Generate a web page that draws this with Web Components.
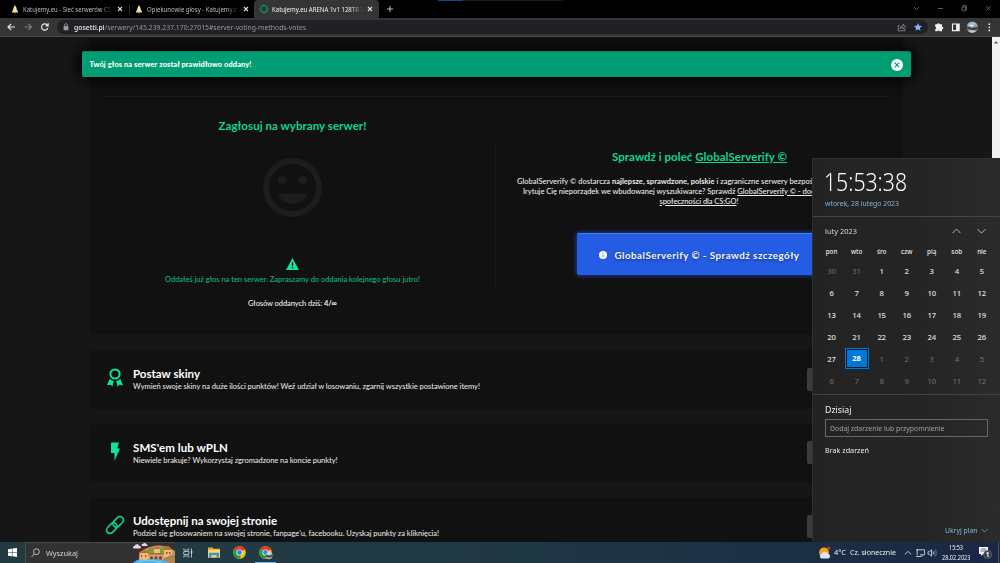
<!DOCTYPE html>
<html lang="pl">
<head>
<meta charset="utf-8">
<title>Katujemy.eu ARENA 1v1 128TR</title>
<style>
    body {
        margin: 0;
        background: #000;
        overflow: hidden;
    }
</style>
</head>
<body>
<desktop-screen></desktop-screen>

<script>
// Base for every element: puts the markup in an open shadow root
class BaseElement extends HTMLElement {
    constructor() {
        super();
        this.shadow = this.attachShadow({mode: "open"});
    }

    connectedCallback() {
        this.shadow.innerHTML = `<style>* { box-sizing: border-box; }</style>` + this.render();
    }
}

// One line of text, tracked in or out to the width given in "w".
// With "squeeze" the glyphs are narrowed instead of the gaps.
class FitText extends BaseElement {
    render() {
        return `<style>:host { display: inline-block; white-space: nowrap; transform-origin: 0 50%; }</style><slot></slot>`;
    }

    connectedCallback() {
        super.connectedCallback();
        const target = parseFloat(this.getAttribute("w"));
        const natural = this.getBoundingClientRect().width;
        const count = this.textContent.length;
        if (!target || !natural) return;
        if (this.hasAttribute("squeeze")) {
            this.style.transform = `scaleX(${(target / natural).toFixed(4)})`;
            this.style.marginRight = (target - natural).toFixed(2) + "px";
        } else {
            this.style.letterSpacing = ((target - natural) / count).toFixed(4) + "px";
        }
    }
}
customElements.define("fit-text", FitText);

class BrowserTab extends BaseElement {
    render() {
        const active = this.hasAttribute("active");
        const icon = active
            ? `<svg width="10" height="10" viewBox="0 0 10 10"><circle cx="5" cy="5" r="3.4" fill="none" stroke="#0c8d68" stroke-width="1.2"/><path d="M5 .6v1.6M5 7.8v1.6M.6 5h1.6M7.8 5h1.6" stroke="#0c8d68" stroke-width="1.4"/></svg>`
            : `<svg width="10" height="10" viewBox="0 0 10 10"><path d="M5 1 6.3 3.6 7 6 8.2 8H1.8L3 6l.6-2.4z" fill="#f3e2a4"/><path d="M2 8h6" stroke="#e0c878" stroke-width="1"/><path d="M4.2 8.2h1.6v1H4.2z" fill="#d9a441"/></svg>`;
        return `
        <style>
            :host {
                display: flex;
                align-items: center;
                height: 18px;
                font: 7.4px "Noto Sans", sans-serif;
                color: #bcbcbc;
            }
            :host([active]) {
                background: #353535;
                color: #f4f4f4;
                border-radius: 4px 4px 0 0;
            }
            .title {
                margin-left: 3px;
                overflow: hidden;
                flex: 1;
                line-height: 12px;
                -webkit-mask: linear-gradient(90deg, #000 86%, transparent);
            }
            .close { margin: 0 5.5px 0 4px; }
        </style>
        ${icon}
        <div class="title"><slot></slot></div>
        <svg class="close" width="6" height="6" viewBox="0 0 6 6"><path d="M1 1l4 4M5 1L1 5" stroke="#ddd" stroke-width="1.1"/></svg>
        `;
    }
}
customElements.define("browser-tab", BrowserTab);

class TabStrip extends BaseElement {
    render() {
        return `
        <style>
            :host {
                display: flex;
                align-items: center;
                height: 18px;
                background: linear-gradient(90deg, transparent 438px, #0a4d84 438px 463px, #1b1b1b 463px 563px, transparent 563px) 0 0 / 100% 1px no-repeat #000;
            }
            browser-tab:nth-of-type(1) { width: 119px; margin-left: 9.5px; }
            browser-tab:nth-of-type(2) { width: 120px; margin-left: 4.5px; }
            browser-tab:nth-of-type(3) { width: 124.5px; padding-left: 4.5px; }
            i { width: 1px; height: 9px; background: #333; }
            .plus { margin-left: 7.5px; }
            .win { margin-left: auto; margin-top: -3px; }
        </style>
        <browser-tab><fit-text w="93" squeeze>Katujemy.eu - Sieć serwerów CS 1</fit-text></browser-tab>
        <i></i>
        <browser-tab><fit-text w="94" squeeze>Opiekunowie głosy - Katujemy.eu</fit-text></browser-tab>
        <browser-tab active><fit-text w="94" squeeze>Katujemy.eu ARENA 1v1 128TR M</fit-text></browser-tab>
        <svg class="plus" width="8" height="8" viewBox="0 0 8 8"><path d="M4 1v6M1 4h6" stroke="#bbb" stroke-width="1"/></svg>
        <svg class="win" width="90" height="10" viewBox="0 0 90 10" fill="none" stroke="#737373" stroke-width=".8">
            <path d="M4 4l2.5 2.5L9 4M28 5.5h5"/>
            <path d="M52 4h3.4v3.8H52zM53 4V2.6h3.5v4h-1.1"/>
            <path d="M76.2 3l4.6 4.6M80.8 3l-4.6 4.6"/>
        </svg>
        `;
    }
}
customElements.define("tab-strip", TabStrip);

class AddressBar extends BaseElement {
    render() {
        return `
        <style>
            :host {
                display: flex;
                align-items: center;
                height: 19px;
                padding-left: 7px;
                background: #353535;
                border-bottom: 1px solid #4a4a4a;
                font: 7.7px "Noto Sans", sans-serif;
                color: #96989b;
            }
            .nav { width: 44px; height: 12px; }
            .field {
                display: flex;
                align-items: center;
                width: 871px;
                height: 14px;
                margin-left: 6px;
                padding-left: 6px;
                border-radius: 7px;
                background: #202124;
            }
            .url { margin-left: 5px; line-height: 12px; }
            .marks { margin-left: auto; margin-right: 5px; }
            b { font-weight: 500; color: #f1f2f4; }
            .tools { margin-left: 5px; }
        </style>
        <svg class="nav" viewBox="0 0 44 12" fill="none" stroke-width="1.2">
            <path d="M8 6H1.3M4.2 2.8L1 6l3.2 3.2" stroke="#e8e8e8"/>
            <path d="M17.5 6h6.7M21.3 2.8L24.5 6l-3.2 3.2" stroke="#7c7c7c"/>
            <path d="M40.4 4.2A3.2 3.2 0 1 0 40.8 7M41.1 2.3v2.5h-2.5" stroke="#e8e8e8"/>
        </svg>
        <div class="field">
            <svg width="6" height="8" viewBox="0 0 6 8"><rect x=".6" y="3" width="4.8" height="4.2" rx=".5" fill="#9a9b9e"/><path d="M1.6 3.2V2.1a1.4 1.4 0 0 1 2.8 0v1.1" fill="none" stroke="#9a9b9e" stroke-width=".8"/></svg>
            <div class="url"><fit-text w="232" squeeze><b>gosetti.pl</b>/serwery/145.239.237.170:27015#server-voting-methods-votes</fit-text></div>
            <svg class="marks" width="26" height="10" viewBox="0 0 26 10">
                <path d="M2.8 3.6H1.2v5.2h6.6V6.8M3 7c.2-2 1.4-3 3.2-3V2.2L8.8 4.8 6.2 7V5.6C4.8 5.6 3.8 6 3 7z" fill="none" stroke="#9a9b9e" stroke-width=".75"/>
                <path d="M21 1l1.2 2.7 2.9.3-2.2 1.9.7 2.9-2.6-1.5-2.6 1.5.7-2.9L16.9 4l2.9-.3z" fill="#8ab4f8"/>
            </svg>
        </div>
        <svg class="tools" width="66" height="14" viewBox="0 0 66 14">
            <path d="M2.2 4.3h2a1.3 1.3 0 0 1 2.5 0H9v2.4a1.3 1.3 0 0 1 0 2.6v2H6.7a1.3 1.3 0 0 0-2.4 0H2.200V9.2a1.3 1.3 0 0 0 0-2.500z" fill="#f1f1f1"/>
            <path d="M19.500 4h6.600v6.600h-6.600z" fill="none" stroke="#f1f1f1" stroke-width="1.2"/><path d="M23.100 4h3v6.600h-3z" fill="#f1f1f1"/>
            <circle cx="39.3" cy="7.2" r="5.6" fill="#8d9295"/>
            <path d="M34.3 5a5.6 5.6 0 0 1 10 0z" fill="#9fb7ca"/>
            <path d="M34 6.500l5 1.500 5.500-1 .2 2-4 1.200-6.500-1.500z" fill="#393c3f"/>
            <path d="M34.800 5.800l4-1.300 3 1.500-2 .8z" fill="#e1e4e6"/>
            <path d="M35.300 11l4-.8 3.500.8a5 5 0 0 1-7.500 0z" fill="#c7c9ca"/>
            <g fill="#e8e8e8"><circle cx="56.3" cy="4.2" r=".9"/><circle cx="56.3" cy="7.3" r=".9"/><circle cx="56.3" cy="10.4" r=".9"/></g>
        </svg>
        `;
    }
}
customElements.define("address-bar", AddressBar);

class VoteToast extends BaseElement {
    render() {
        return `
        <style>
            :host {
                display: flex;
                align-items: center;
                justify-content: space-between;
                padding: 0 8px 0 7.5px;
                border-radius: 2px;
                background: #009d72;
                box-shadow: 0 0 14px 3px #000;
                border-top: 1px solid #0a7d5d;
                color: #fff;
                font: 900 7.4px/12px Lato, sans-serif;
            }
        </style>
        <slot></slot>
        <svg width="12" height="12" viewBox="0 0 12 12"><circle cx="6" cy="6" r="6" fill="#fff"/><path d="M3.7 3.7l4.6 4.6M8.3 3.7L3.7 8.3" stroke="#009d72" stroke-width="1.2"/></svg>
        `;
    }
}
customElements.define("vote-toast", VoteToast);

class VoteCard extends BaseElement {
    render() {
        return `
        <style>
            :host {
                display: block;
                height: 298px;
                padding-top: 59px;
                background: #111;
                border-radius: 0 0 4px 4px;
                font: 500 7.5px/12px Lato, sans-serif;
                color: #ececec;
            }
            .rule { height: 1px; margin: 0 14px; background: #1b1b1b; }
            .columns { display: flex; }
            .left, .right {
                display: flex;
                flex-direction: column;
                align-items: center;
                width: 405px;
            }
            .left { padding-top: 21px; }
            .right { padding-top: 51.5px; width: 407px; }
            .divider { width: 1px; height: 144px; margin-top: 48px; background: #1a1a1a; }
            h2 {
                margin: 0;
                font: bold 11.5px/16px Lato, sans-serif;
                color: #0bd596;
            }
            .mood { margin-top: 17.5px; fill: #1d1d1d; }
            .warn { margin-top: 35.5px; }
            .done { margin-top: 3.5px; color: #0cb681; }
            .count { margin-top: 12px; }
            .about {
                align-self: stretch;
                display: flex;
                flex-direction: column;
                align-items: flex-start;
                margin-top: 12px;
                line-height: 10px;
            }
            .about fit-text:nth-child(1) { margin-left: 21px; }
            .about fit-text:nth-child(2) { margin-left: 27px; }
            .about fit-text:nth-child(3) { margin-left: 163.5px; }
            .button {
                display: flex;
                align-items: center;
                width: 245px;
                height: 42px;
                margin-top: 26.5px;
                padding: 0 0 0 22px;
                border-radius: 2px;
                background: #245de3;
                border-top: 1px solid #4b7bea;
                box-shadow: 0 0 5px #1b4fc9;
                font: bold 9.8px/14px Lato, sans-serif;
                color: #f4f7ff;
                text-shadow: 0 1px 3px rgba(0, 0, 0, .5);
            }
            .button fit-text { margin-left: 7.5px; }
        </style>
        <div class="rule"></div>
        <div class="columns">
            <div class="left">
                <h2><fit-text w="148">Zagłosuj na wybrany serwer!</fit-text></h2>
                <svg class="mood" width="71" height="71" viewBox="0 0 24 24">
                    <path fill-rule="evenodd" d="M12 2a10 10 0 1 0 0 20 10 10 0 0 0 0-20zm0 18a8 8 0 1 1 0-16 8 8 0 0 1 0 16z"/>
                    <circle cx="8.5" cy="9.5" r="1.5"/><circle cx="15.5" cy="9.5" r="1.5"/>
                    <path d="M7 14a5.3 5.3 0 0 0 10 0z"/>
                </svg>
                <svg class="warn" width="13" height="12" viewBox="0 0 13 12"><path d="M6.5 0L13 12H0z" fill="#0fe3a0"/><path d="M6.5 4.3v3.500M6.5 8.800v1.400" stroke="#111" stroke-width="1.2"/></svg>
                <div class="done"><fit-text w="255">Oddałeś już głos na ten serwer. Zapraszamy do oddania kolejnego głosu jutro!</fit-text></div>
                <div class="count"><fit-text w="89">Głosów oddanych dziś: <b>4/∞</b></fit-text></div>
            </div>
            <div class="divider"></div>
            <div class="right">
                <h2><fit-text w="175">Sprawdź i poleć <u>GlobalServerify ©</u></fit-text></h2>
                <div class="about">
                    <fit-text w="296">GlobalServerify © dostarcza <b>najlepsze, sprawdzone, polskie</b> i zagraniczne serwery bezpoś</fit-text>
                    <fit-text w="291.5">Irytuje Cię nieporządek we wbudowanej wyszukiwarce? Sprawdź <u>GlobalServerify © - doc</u></fit-text>
                    <fit-text w="79"><u>społeczności dla CS:GO</u>!</fit-text>
                </div>
                <div class="button">
                    <svg width="8" height="8" viewBox="0 0 8 8"><circle cx="4" cy="4" r="4" fill="#fff"/><path d="M4 1.7v1M4 3.5v2.6" stroke="#6f93e6" stroke-width="1"/></svg>
                    <fit-text w="185">GlobalServerify © - Sprawdź szczegóły</fit-text>
                </div>
            </div>
        </div>
        `;
    }
}
customElements.define("vote-card", VoteCard);

class VoteMethod extends BaseElement {
    render() {
        const icons = {
            award: `<circle cx="9" cy="6" r="4.6" fill="none" stroke="#0fe3a0" stroke-width="2"/><path d="M3.7 10.8c1 1.1 2.3 1.9 4.2 2.2L6.3 18.7 4.8 16.8 1 17.2zM14.3 10.8c-1 1.1-2.3 1.9-4.2 2.2l1.6 5.7 1.5-1.9 3.8.4z" fill="#0fe3a0"/>`,
            bolt: `<path d="M5 .5h8l-1.7 6H14L8.5 18.800V11H5z" fill="#0fe3a0"/>`,
            link: `<g transform="rotate(-45 9 10)" fill="none" stroke="#0cd294" stroke-width="1.6"><rect x="-1.5" y="6.5" width="12" height="7" rx="3.5"/><rect x="7.5" y="6.5" width="12" height="7" rx="3.5"/></g>`
        };
        return `
        <style>
            :host {
                display: flex;
                align-items: center;
                height: 58.5px;
                padding-left: 15.5px;
                border-radius: 4px;
                background: #111;
                color: #e2e2e2;
                font: 500 7.5px/10px Lato, sans-serif;
            }
            svg { margin-top: -2px; overflow: visible; }
            .text { margin-left: 9.5px; padding-top: 1px; }
            .title { font: bold 11.5px/14px Lato, sans-serif; color: #fff; }
            .desc { padding-top: .7px; }
            .go {
                width: 80px;
                height: 23px;
                margin: 0 16px 0 auto;
                background: linear-gradient(90deg, #3c3c3c, #303030);
                border-radius: 2px;
            }
        </style>
        <svg width="18" height="20" viewBox="0 0 18 20">${icons[this.getAttribute("icon")]}</svg>
        <div class="text">
            <div class="title"><slot name="title"></slot></div>
            <div class="desc"><slot></slot></div>
        </div>
        <div class="go"></div>
        `;
    }
}
customElements.define("vote-method", VoteMethod);

class SitePage extends BaseElement {
    render() {
        return `
        <style>
            :host {
                display: flex;
                position: relative;
                height: 505px;
                overflow: hidden;
                background: #161616;
            }
            main {
                display: flex;
                flex-direction: column;
                gap: 15px;
                width: 813px;
                margin-left: 90px;
            }
            vote-card, vote-method { flex-shrink: 0; }
            vote-toast {
                position: absolute;
                left: 82px;
                top: 14px;
                width: 828.5px;
                height: 26px;
            }
            .scroll {
                width: 8px;
                margin-left: auto;
                padding: 4px 0 0 2px;
                background: #f1f1f1;
            }
            .scroll svg { display: block; }
        </style>
        <main>
            <vote-card></vote-card>
            <vote-method icon="award">
                <fit-text slot="title" w="67">Postaw skiny</fit-text>
                <fit-text w="347">Wymień swoje skiny na duże ilości punktów! Weź udział w losowaniu, zgarnij wszystkie postawione itemy!</fit-text>
            </vote-method>
            <vote-method icon="bolt">
                <fit-text slot="title" w="95">SMS'em lub wPLN</fit-text>
                <fit-text w="204.5">Niewiele brakuje? Wykorzystaj zgromadzone na koncie punkty!</fit-text>
            </vote-method>
            <vote-method icon="link">
                <fit-text slot="title" w="144">Udostępnij na swojej stronie</fit-text>
                <fit-text w="306">Podziel się głosowaniem na swojej stronie, fanpage'u, facebooku. Uzyskaj punkty za kliknięcia!</fit-text>
            </vote-method>
        </main>
        <div class="scroll"><svg width="4" height="3" viewBox="0 0 4 3"><path d="M2 0l2 2.5H0z" fill="#555"/></svg></div>
        <vote-toast><fit-text w="162">Twój głos na serwer został prawidłowo oddany!</fit-text></vote-toast>
        `;
    }
}
customElements.define("site-page", SitePage);

class CalendarFlyout extends BaseElement {
    // Six weeks starting on Monday, 30 January
    days() {
        let html = "";
        for (let i = 0; i < 42; i++) {
            const day = i < 2 ? 30 + i : i < 30 ? i - 1 : i - 29;
            const type = i < 2 || i > 29 ? "dim" : day === 28 ? "today" : "";
            html += `<span class="${type}">${day}</span>`;
        }
        return html;
    }

    render() {
        return `
        <style>
            :host {
                display: flex;
                flex-direction: column;
                background: linear-gradient(90deg, #232323, #252525 60%, #2b2b2b);
                border: solid #303030;
                border-width: 1px 0 0 1px;
                font: 7.6px/12px "Noto Sans", sans-serif;
                color: #e8e8e8;
            }
            .clock {
                height: 58px;
                padding: 4.5px 0 0 11px;
                border-bottom: 1px solid #444;
            }
            .time { font: 300 25px/35px "Noto Sans", sans-serif; color: #fff; }
            .date { line-height: 8px; color: #83b5dc; margin: 0 0 0 1px; }
            .time fit-text, .date fit-text { display: block; width: max-content; }
            .month {
                display: flex;
                align-items: center;
                justify-content: space-between;
                height: 27px;
                padding: 0 14px 0 12px;
                color: #d4d4d4;
            }
            .week, .grid {
                display: grid;
                grid-template-columns: repeat(7, 25.05px);
                margin-left: 6px;
                text-align: center;
                place-items: center;
            }
            .week { height: 15px; font-size: 6.3px; font-weight: 500; }
            .grid { grid-auto-rows: 21.9px; margin-top: 1.2px; font-size: 7.7px; font-weight: 500; color: #e0e0e0; }
            .grid span { letter-spacing: -.2px; }
            .grid .dim { color: #727272; font-weight: 400; }
            .grid .today {
                width: 24px;
                height: 21px;
                padding: 1px;
                border: 1px solid #0078d7;
                background: #0078d7;
                box-shadow: inset 0 0 0 1px #101820;
                line-height: 17px;
                font-weight: 700;
                color: #fff;
            }
            .events {
                flex: 1;
                display: flex;
                flex-direction: column;
                align-items: flex-start;
                margin-top: 2.4px;
                padding: 8.5px 12px 6px 11.5px;
                border-top: 1px solid #414141;
            }
            .events h3 { margin: 0; font: 9.2px/13px "Noto Sans", sans-serif; color: #f1f1f1; }
            .input {
                width: 163px;
                height: 18px;
                margin: 3px 0 6.5px;
                padding: 2px 0 0 4px;
                border: 1px solid #686868;
                color: #a0a0a0;
            }
            .hide {
                display: flex;
                align-items: center;
                gap: 3px;
                margin: auto 0 0 auto;
                color: #83b5dc;
            }
        </style>
        <div class="clock">
            <div class="time"><fit-text w="83" squeeze>15:53:38</fit-text></div>
            <div class="date"><fit-text w="74" squeeze>wtorek, 28 lutego 2023</fit-text></div>
        </div>
        <div class="month">
            <fit-text w="32" squeeze>luty 2023</fit-text>
            <svg width="34" height="6" viewBox="0 0 34 6" fill="none" stroke="#c0c0c0" stroke-width=".9"><path d="M.5 5.2L4.5 1l4 4.2M25.5 1l4 4.2 4-4.2"/></svg>
        </div>
        <div class="week"><span>pon</span><span>wto</span><span>śro</span><span>czw</span><span>pią</span><span>sob</span><span>nie</span></div>
        <div class="grid">${this.days()}</div>
        <div class="events">
            <h3><fit-text w="26.5" squeeze>Dzisiaj</fit-text></h3>
            <div class="input"><fit-text w="114.5" squeeze>Dodaj zdarzenie lub przypomnienie</fit-text></div>
            <fit-text w="44" squeeze>Brak zdarzeń</fit-text>
            <div class="hide"><fit-text w="32.5" squeeze>Ukryj plan</fit-text><svg width="7" height="5" viewBox="0 0 7 5"><path d="M.5 1l3 3 3-3" fill="none" stroke="#83b5dc" stroke-width=".7"/></svg></div>
        </div>
        `;
    }
}
customElements.define("calendar-flyout", CalendarFlyout);

class TaskBar extends BaseElement {
    chrome() {
        return `
            <circle cx="6.5" cy="6.5" r="6.3" fill="#fbc116"/>
            <path d="M6.5 6.5L1.05 3.35A6.3 6.3 0 0 1 11.96 3.35z" fill="#e33b2e"/>
            <path d="M6.5 6.5L1.05 3.35A6.3 6.3 0 0 0 6.3 12.8L9.2 8z" fill="#229a48"/>
            <path d="M6.5 3.4H12" stroke="#e33b2e" stroke-width=".6"/>
            <circle cx="6.5" cy="6.5" r="3.1" fill="#fff"/><circle cx="6.5" cy="6.5" r="2.4" fill="#3c7fe8"/>`;
    }

    render() {
        return `
        <style>
            :host {
                display: flex;
                height: 21px;
                align-items: center;
                background: linear-gradient(90deg, #223b42, #213944 45%, #1c3044 75%, #1a2745);
                font: 7.5px/11px "Noto Sans", sans-serif;
                color: #f0f0f0;
            }
            .start { margin-left: 8px; }
            .search {
                display: flex;
                align-items: center;
                width: 150px;
                height: 21px;
                margin-left: 8px;
                padding-left: 5px;
                background: #323232;
                border: 1px solid #494949;
                border-width: 1px 0 0 1px;
                color: #d4d4d4;
            }
            .search fit-text { margin-left: 5.5px; }
            .town { margin-left: auto; }
            .view { margin-left: 8px; }
            .folder { margin-left: 15px; }
            .chrome { margin-left: 13px; }
            .app {
                width: 21px;
                height: 21px;
                margin-left: 9px;
                padding: 4px 0 0 4px;
                border-bottom: 1.5px solid #76b9ed;
            }
            .app svg { display: block; }
            .weather { margin-left: auto; }
            .temp { margin-left: 3px; }
            .sky { margin: 0 8px 0 4px; }
            .clock {
                width: 32px;
                margin-left: 2px;
                text-align: center;
                font-size: 6.6px;
                line-height: 9.5px;
            }
            .note { margin: 0 6px 0 7px; }
            .peek { width: 1px; height: 21px; background: #47536b; margin-right: 1px; }
        </style>
        <svg class="start" width="9" height="9" viewBox="0 0 9 9" fill="#fff"><path d="M0 1.3L3.9.7v3.5H0zM4.4.6L9 0v4.2H4.4zM0 4.7h3.9v3.500L0 7.700zM4.4 4.7H9V9l-4.6-.7z"/></svg>
        <div class="search">
            <svg width="9" height="10" viewBox="0 0 9 10" fill="none" stroke="#ccc" stroke-width=".9"><circle cx="5.4" cy="3.7" r="2.9"/><path d="M3.3 5.9L.5 9"/></svg>
            <fit-text w="32" squeeze>Wyszukaj</fit-text>
            <svg class="town" width="42" height="20" viewBox="0 0 42 20">
                <path d="M7 11c3-5 8-7 14-8s12 0 16 2l5 3v12H5z" fill="#c49458"/>
                <path d="M13 8c2-3 5-4 8-3l6 1 3-3 6 1 3 4-9 3H16z" fill="#7d9a3c"/>
                <path d="M21 5.5h6V10h-6zM31 6h8v9h-8zM6.5 9.500H16V17H6.500z" fill="#eebb7c"/>
                <path d="M5.5 10l5-3.5 6.500 3.500zM30 7l5-4.500L40 7zM20 5.700l4-2.200 4 2.200z" fill="#c8642f"/>
                <path d="M15 11h16v6H15z" fill="#e0a36c"/><path d="M15 11h16" stroke="#a9583a" stroke-width="1.1"/>
                <path d="M17 17v-2.500a1.500 1.500 0 0 1 3 0V17M21.500 17v-2.500a1.500 1.500 0 0 1 3 0V17M26 17v-2.500a1.500 1.500 0 0 1 3 0V17" fill="#7b4b37"/>
                <path d="M8 12h1.300v2H8zM12 12h1.300v2H12zM33 9h1.500v2H33zM36 9h1.500v2H36z" fill="#8b5836"/>
                <path d="M30 17c2-4 4-2 6-4s4-1 6-1v8H30z" fill="#b7824f"/><path d="M33 14.500l3-1 2 1.500-3 1zM38 14l4-1v2z" fill="#7e923e"/>
                <path d="M0 20c3-4 9-4 13-3 6-1.500 10-1 15-.5L37 20z" fill="#49b2ef"/><path d="M6 18.500c6-1.500 15-1 23 .5" stroke="#a3d9f4" stroke-width=".7" fill="none"/>
                <path d="M1 5.500C-.5 5.500-.3 3 1.500 3 2.500.8 5.500.8 6 2.800c2.200-.2 2.800 2.700.5 2.700zM9.500 3C8 3 8.200 1 9.800 1c1-1.500 3-1.200 3.400.2 2 .1 1.800 1.800.3 1.800z" fill="#f1d5da"/>
            </svg>
        </div>
        <svg class="view" width="10" height="10" viewBox="0 0 10 10" fill="none" stroke="#d2d7d8" stroke-width=".8"><path d="M.8.5V2h5V.5M.8 9.500V8h5v1.500M.8 3.500h5v3h-5zM8.500.5v9"/><path d="M7.7 3.2h1.700v1.600H7.700z" fill="#d2d7d8" stroke="none"/></svg>
        <svg class="folder" width="12" height="11" viewBox="0 0 12 11"><path d="M0 .5h4.500l1 1.200H12v8.800H0z" fill="#e9a928"/><path d="M0 2.700h12v7.800H0z" fill="#ffd667"/><path d="M1 10.500V5.700h10v4.800H8.500V8.300h-5v2.200z" fill="#3a93d8"/></svg>
        <svg class="chrome" width="13" height="13" viewBox="0 0 13 13">${this.chrome()}</svg>
        <div class="app"><svg width="15" height="14" viewBox="0 0 15 14">${this.chrome()}<circle cx="10" cy="9.6" r="3.6" fill="#a6abad"/><path d="M6.5 9l3.500.8 3.500-.8v1.400l-3.500 1-3.400-1z" fill="#3b4043"/><path d="M7.600 7.400a3.600 3.600 0 0 1 4.800 0L10 8.500z" fill="#dfe6ea"/></svg></div>

        <svg class="weather" width="13" height="13" viewBox="0 0 13 13"><circle cx="6" cy="6.5" r="4.9" fill="#f7a41d"/><path d="M3.5 12.500a2.400 2.400 0 0 1 .2-4.600 3.300 3.300 0 0 1 6-.2 2.500 2.500 0 0 1 .8 4.800z" fill="#dbe7f6"/><circle cx="10.7" cy="2.2" r="1.6" fill="#d92f2f"/></svg>
        <div class="temp"><fit-text w="12" squeeze>4°C</fit-text></div>
        <div class="sky"><fit-text w="46" squeeze>Cz. słonecznie</fit-text></div>
        <svg width="34" height="10" viewBox="0 0 34 10" fill="none" stroke="#e3e6ec" stroke-width=".8">
            <path d="M.8 6.4L4 3.4l3.2 3M13.5 1.800h7v5H16M12 1.800h2.500M13.200 1.800v5.500M12 8.500h5M18 6.800v2"/>
            <path d="M24 3.700h1.500l2-1.900v6.400l-2-1.900H24z"/><path d="M29 3.500q1 1.500 0 3"/><path d="M30.300 2.500q1.600 2.500 0 5M31.500 1.500q2 3.500 0 7" stroke="#6e7990"/>
        </svg>
        <div class="clock"><fit-text w="14" squeeze>15:53</fit-text><br><fit-text w="28.5" squeeze>28.02.2023</fit-text></div>
        <svg class="note" width="13" height="13" viewBox="0 0 13 13"><path d="M0 1h9v7H4L2 10V8H0z" fill="#fff"/><path d="M1.5 3h6M1.5 5h6" stroke="#1a2745" stroke-width=".7"/><circle cx="8.6" cy="8.5" r="4" fill="#343b48" stroke="#8b919c" stroke-width=".5"/><text x="8.6" y="10.8" font-family="Noto Sans" font-size="6.3" font-weight="bold" fill="#fff" text-anchor="middle">1</text></svg>
        <div class="peek"></div>
        `;
    }
}
customElements.define("task-bar", TaskBar);

class DesktopScreen extends BaseElement {
    render() {
        return `
        <style>
            :host {
                display: flex;
                flex-direction: column;
                position: relative;
                width: 1000px;
                height: 563px;
                overflow: hidden;
            }
            calendar-flyout {
                position: absolute;
                right: 0;
                bottom: 21px;
                width: 188px;
                height: 384px;
            }
        </style>
        <tab-strip></tab-strip>
        <address-bar></address-bar>
        <site-page></site-page>
        <task-bar></task-bar>
        <calendar-flyout></calendar-flyout>
        `;
    }
}
customElements.define("desktop-screen", DesktopScreen);
</script>
</body>
</html>
